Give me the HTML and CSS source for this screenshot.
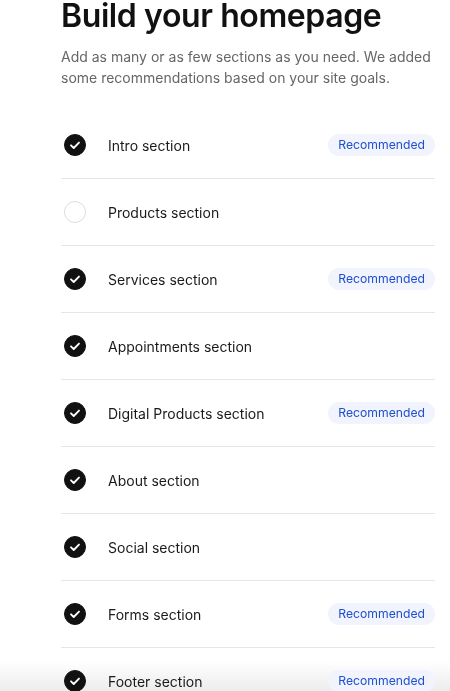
FILE: index.html
```html
<!DOCTYPE html>
<html lang="en">
<head>
<meta charset="utf-8">
<title>Build your homepage</title>
<link rel="stylesheet" href="styles.css">
</head>
<body>
<div class="fade"></div>
<main class="page">
  <h1 class="title">Build your homepage</h1>
  <p class="lead">Add as many or as few sections as you need. We added some recommendations based on your site goals.</p>
  <ul class="sections">
    <li class="row"><span class="check on"><svg viewBox="0 0 22 22"><path d="M6.6 11.3l3 3 5.8-6"/></svg></span><span class="label">Intro section</span><span class="badge">Recommended</span></li>
    <li class="row"><span class="check"></span><span class="label">Products section</span></li>
    <li class="row"><span class="check on"><svg viewBox="0 0 22 22"><path d="M6.6 11.3l3 3 5.8-6"/></svg></span><span class="label">Services section</span><span class="badge">Recommended</span></li>
    <li class="row"><span class="check on"><svg viewBox="0 0 22 22"><path d="M6.6 11.3l3 3 5.8-6"/></svg></span><span class="label">Appointments section</span></li>
    <li class="row"><span class="check on"><svg viewBox="0 0 22 22"><path d="M6.6 11.3l3 3 5.8-6"/></svg></span><span class="label">Digital Products section</span><span class="badge">Recommended</span></li>
    <li class="row"><span class="check on"><svg viewBox="0 0 22 22"><path d="M6.6 11.3l3 3 5.8-6"/></svg></span><span class="label">About section</span></li>
    <li class="row"><span class="check on"><svg viewBox="0 0 22 22"><path d="M6.6 11.3l3 3 5.8-6"/></svg></span><span class="label">Social section</span></li>
    <li class="row"><span class="check on"><svg viewBox="0 0 22 22"><path d="M6.6 11.3l3 3 5.8-6"/></svg></span><span class="label">Forms section</span><span class="badge">Recommended</span></li>
    <li class="row"><span class="check on"><svg viewBox="0 0 22 22"><path d="M6.6 11.3l3 3 5.8-6"/></svg></span><span class="label">Footer section</span><span class="badge">Recommended</span></li>
  </ul>
</main>
</body>
</html>
```
FILE: styles.css
```css
html {
  margin: 0;
  padding: 0;
  background: #fff;
  overflow: hidden;
}
body {
  margin: 0;
  padding: 0;
  font-family: Inter, "Liberation Sans", sans-serif;
  color: #111;
}
.page {
  padding: 0 15px 0 61px;
}
.title {
  margin: -3px 0 0;
  font-size: 32px;
  line-height: 38px;
  font-weight: 600;
  letter-spacing: -0.4px;
  color: #111;
}
.lead {
  margin: 11px 0 0;
  font-size: 14px;
  line-height: 21px;
  color: #666;
  max-width: 380px;
}
.sections {
  list-style: none;
  margin: 24px 0 0;
  padding: 0;
}
.row {
  display: flex;
  align-items: center;
  height: 66px;
  border-bottom: 1px solid #e6e6e6;
}
.check {
  box-sizing: border-box;
  width: 22px;
  height: 22px;
  margin-left: 3px;
  border-radius: 50%;
  border: 1px solid #dcdcdc;
  flex: none;
  display: flex;
}
.check.on {
  background: #111;
  border-color: #111;
}
.check svg {
  width: 20px;
  height: 20px;
  fill: none;
  stroke: #fff;
  stroke-width: 2;
  stroke-linecap: round;
  stroke-linejoin: round;
}
.label {
  margin-left: 22px;
  font-size: 14px;
  color: #1a1a1a;
  flex: 1;
}
.badge {
  background: #f1f3fd;
  color: #1f4fcf;
  font-size: 12.2px;
  line-height: 22px;
  padding: 0 10px;
  border-radius: 11px;
}
.fade {
  position: fixed;
  z-index: -1;
  left: 0;
  right: 0;
  bottom: 0;
  height: 30px;
  background: linear-gradient(to bottom, rgba(236,236,236,0), #ececec);
}
```
